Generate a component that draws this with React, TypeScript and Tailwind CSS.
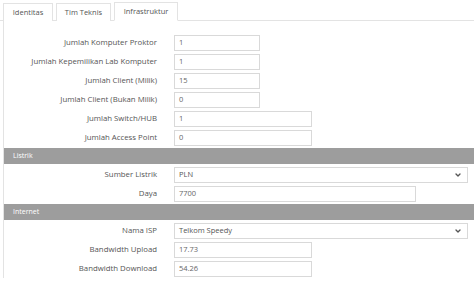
const rowsTop = [
  { label: "Jumlah Komputer Proktor", value: "1", w: "w-[86px]" },
  { label: "Jumlah Kepemilikan Lab Komputer", value: "1", w: "w-[86px]" },
  { label: "Jumlah Client (Milik)", value: "15", w: "w-[86px]" },
  { label: "Jumlah Client (Bukan Milik)", value: "0", w: "w-[86px]" },
  { label: "Jumlah Switch/HUB", value: "1", w: "w-[138px]" },
  { label: "Jumlah Access Point", value: "0", w: "w-[138px]" },
];

function Chevron() {
  return (
    <svg width="8" height="8" viewBox="0 0 24 24" fill="none" stroke="#555" strokeWidth="4" strokeLinecap="round" strokeLinejoin="round">
      <path d="M6 9l6 6 6-6" />
    </svg>
  );
}

function Row({ label, children }: { label: string; children: React.ReactNode }) {
  return (
    <div className="flex items-center h-[19px]">
      <div className="w-[153px] shrink-0 text-right text-[7.8px] text-[#555] whitespace-nowrap">{label}</div>
      <div className="ml-[17px] flex-1">{children}</div>
    </div>
  );
}

function Field({ value, w }: { value: string; w: string }) {
  return (
    <div className={`${w} h-[16px] border border-[#d9d9d9] bg-white px-[4px] flex items-center text-[7.5px] text-[#666]`}>
      {value}
    </div>
  );
}

function Select({ value }: { value: string }) {
  return (
    <div className="w-[294px] h-[16px] border border-[#d9d9d9] bg-white pl-[4px] pr-[5px] flex items-center justify-between text-[7.5px] text-[#555]">
      <span>{value}</span>
      <Chevron />
    </div>
  );
}

function Section({ title }: { title: string }) {
  return (
    <div className="h-[16px] bg-[#9d9d9d] flex items-center pl-[9px] text-[7px] text-white font-medium">{title}</div>
  );
}

export default function App() {
  return (
    <div className="w-[474px] h-[283px] bg-white overflow-hidden" style={{ fontFamily: '"Open Sans", sans-serif' }}>
      <div className="flex items-end h-[21px] pl-[3px] border-b border-[#e3e3e3]">
        <div className="h-[18px] w-[50px] border border-[#e3e3e3] border-b-0 flex items-center justify-center text-[7.5px] text-[#555] mb-[-1px] bg-white">Identitas</div>
        <div className="ml-[3px] h-[18px] w-[55px] border border-[#e3e3e3] border-b-0 flex items-center justify-center text-[7.5px] text-[#555] mb-[-1px] bg-white">Tim Teknis</div>
        <div className="ml-[3px] h-[19px] w-[64px] border border-[#e3e3e3] border-b-white flex items-center justify-center text-[7.5px] text-[#555] mb-[-1px] bg-white">Infrastruktur</div>
      </div>
      <div className="ml-[3px] border-l border-[#e3e3e3] pt-[12px]">
        <div className="flex flex-col">
          {rowsTop.map((r) => (
            <Row key={r.label} label={r.label}>
              <Field value={r.value} w={r.w} />
            </Row>
          ))}
        </div>
        <div className="mt-[1px]">
          <Section title="Listrik" />
        </div>
        <div className="flex flex-col pt-[1px]">
          <Row label="Sumber Listrik">
            <Select value="PLN" />
          </Row>
          <Row label="Daya">
            <Field value="7700" w="w-[242px]" />
          </Row>
        </div>
        <div className="mt-[1px]">
          <Section title="Internet" />
        </div>
        <div className="flex flex-col pt-[1px]">
          <Row label="Nama ISP">
            <Select value="Telkom Speedy" />
          </Row>
          <Row label="Bandwidth Upload">
            <Field value="17.73" w="w-[138px]" />
          </Row>
          <Row label="Bandwidth Download">
            <Field value="54.26" w="w-[138px]" />
          </Row>
        </div>
      </div>
    </div>
  );
}
